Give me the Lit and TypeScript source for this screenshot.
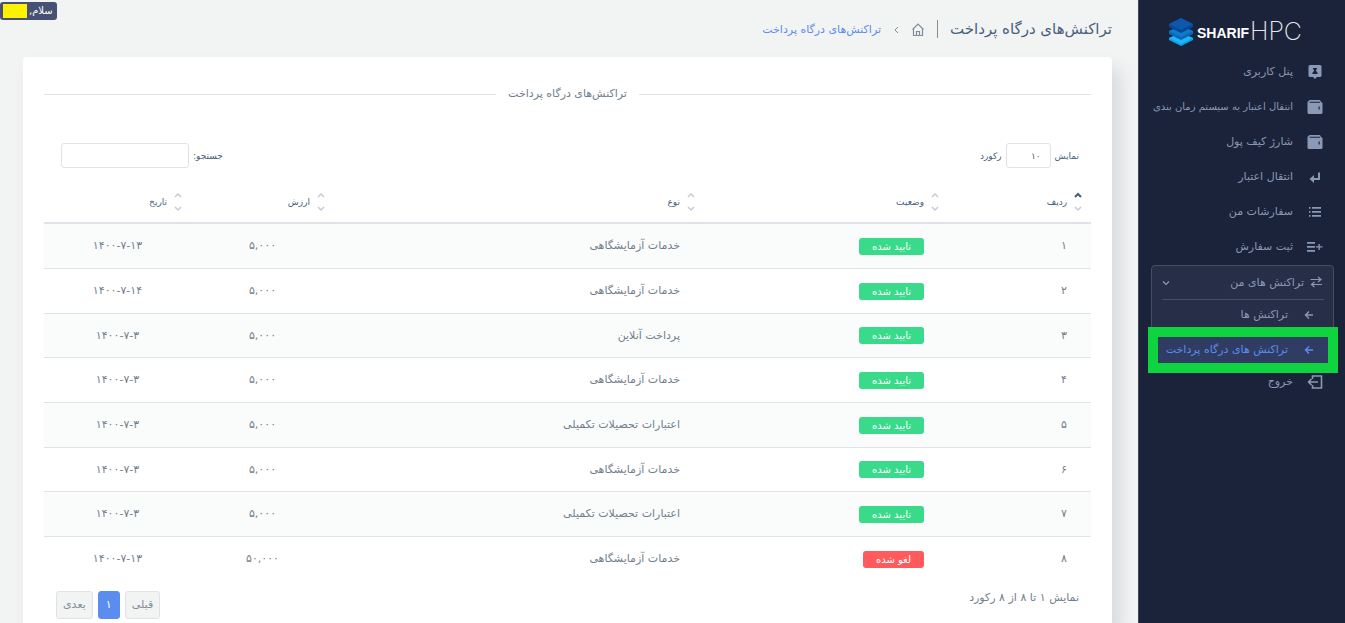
import { LitElement, html, css, svg } from "lit";
import { customElement, state } from "lit/decorators.js";

interface Row {
  id: string;
  ok: boolean;
  kind: string;
  amount: string;
  date: string;
}

const LAB = "خدمات آزمایشگاهی";
const GRAD = "اعتبارات تحصیلات تکمیلی";

const ROWS: Row[] = [
  { id: "۱", ok: true, kind: LAB, amount: "۵,۰۰۰", date: "۱۴۰۰-۷-۱۳" },
  { id: "۲", ok: true, kind: LAB, amount: "۵,۰۰۰", date: "۱۴۰۰-۷-۱۴" },
  { id: "۳", ok: true, kind: "پرداخت آنلاین", amount: "۵,۰۰۰", date: "۱۴۰۰-۷-۳" },
  { id: "۴", ok: true, kind: LAB, amount: "۵,۰۰۰", date: "۱۴۰۰-۷-۳" },
  { id: "۵", ok: true, kind: GRAD, amount: "۵,۰۰۰", date: "۱۴۰۰-۷-۳" },
  { id: "۶", ok: true, kind: LAB, amount: "۵,۰۰۰", date: "۱۴۰۰-۷-۳" },
  { id: "۷", ok: true, kind: GRAD, amount: "۵,۰۰۰", date: "۱۴۰۰-۷-۳" },
  { id: "۸", ok: false, kind: LAB, amount: "۵۰,۰۰۰", date: "۱۴۰۰-۷-۱۳" },
];

const icon = (body: unknown) =>
  html`<svg class="icon" viewBox="0 0 16 16" width="16" height="16" aria-hidden="true">${body}</svg>`;

const userIcon = icon(svg`<path fill="currentColor" fill-rule="evenodd" d="M3 1h10a1.500 1.500 0 0 1 1.500 1.500v9A1.500 1.500 0 0 1 13 13h-3l-2 2-2-2H3a1.500 1.500 0 0 1-1.500-1.500v-9A1.500 1.500 0 0 1 3 1zM6 4v1l1 1v1L5.500 8.500v1.500h5V8.500L9 7V6l1-1V4z"/>`);
const walletIcon = icon(svg`<path fill="currentColor" fill-rule="evenodd" d="M2.500 1h10.500l1 2 1.500 1v10l-1 1h-13l-1-1V3zM2.500 2.800v.9h10.500v-.9zM11.500 7.500v3h1.200v-3z"/>`);
const returnIcon = icon(svg`<path fill="none" stroke="currentColor" stroke-width="2" d="M12 3.500v6.500H5"/><path fill="currentColor" d="M7 6v8l-4.500-4z"/>`);
const listIcon = icon(svg`<path fill="currentColor" d="M2 3h1.500v1.700H2zM2 7h1.500v1.700H2zM2 11h1.500v1.700H2zM5 3h9v1.700H5zM5 7h9v1.700H5zM5 11h9v1.700H5z"/>`);
const listPlusIcon = icon(svg`<path fill="currentColor" d="M0 3h8v1.700H0zM0 7h8v1.700H0zM0 11h8v1.700H0zM11.500 5h1.300v2.300H15.500v1.300h-2.700V11h-1.300V8.600H9V7.300h2.500z"/>`);
const swapIcon = icon(svg`<path fill="none" stroke="currentColor" stroke-width="1.200" d="M2.500 4.500h10M10 2l3 2.500L10 7M4 9.500h10M6.500 7L3.500 9.500l3 2.500"/>`);
const arrowIcon = html`<svg viewBox="0 0 10 10" width="10" height="10" aria-hidden="true"><path fill="none" stroke="currentColor" stroke-width="1.400" d="M9 5H2M5 1.500L1.500 5 5 8.500"/></svg>`;
const exitIcon = icon(svg`<path fill="none" stroke="currentColor" stroke-width="1.600" d="M5.500 5V2H14.500v12H5.500V11M11 8H1.500M4.500 5L1.500 8l3 3"/>`);

@customElement("app-root")
export class AppRoot extends LitElement {
  @state() private query = "";

  static styles = css`
    :host {
      display: block;
      direction: rtl;
      min-height: 100vh;
      font-family: "DejaVu Sans", sans-serif;
      font-size: 11px;
      line-height: 16px;
      color: #727e8c;
      background: #f2f4f4;
    }
    * {
      box-sizing: border-box;
    }
    a {
      color: inherit;
      text-decoration: none;
    }
    .shell {
      display: flex;
      min-height: 100vh;
      position: relative;
      overflow: hidden;
    }
    .greeting {
      position: absolute;
      top: 2px;
      left: 0;
      display: flex;
      align-items: center;
      gap: 2px;
      height: 18px;
      padding: 0 4px 0 3px;
      border-radius: 3px;
      background: #475174;
      color: #fff;
      font-size: 10px;
    }
    .mask {
      width: 24px;
      height: 14px;
      background: #fff200;
    }
    .side {
      flex: none;
      width: 207px;
      padding-top: 16px;
      border-left: 1px solid #3c4757;
      background: #1a233a;
      color: #8a99b5;
    }
    .logo {
      display: block;
      width: 144px;
      height: 32px;
      margin: 0 34px 6px 0;
    }
    .item {
      display: flex;
      align-items: center;
      gap: 14px;
      height: 35px;
      padding-right: 22px;
      white-space: nowrap;
    }
    .icon {
      flex: none;
    }
    .small {
      font-size: 10px;
    }
    .group {
      margin: 1px 11px 0 12px;
      padding: 0 5px 0 6px;
      border: 1px solid #464d5c;
      border-radius: 4px;
      background: #272e48;
    }
    .toggle {
      display: flex;
      align-items: center;
      gap: 4px;
      width: 100%;
      height: 33px;
      padding: 0 4px;
      border: 0;
      background: none;
      color: inherit;
      font: inherit;
    }
    .toggle .caret {
      margin-right: auto;
    }
    .rule {
      height: 1px;
      margin: 0 4px;
      background: #464d5c;
    }
    .sub {
      display: flex;
      align-items: center;
      gap: 16px;
      height: 26px;
      margin: 2px 0 9px;
      padding-right: 14px;
      white-space: nowrap;
    }
    .active {
      margin-bottom: 0;
      background: #313c62;
      color: #5a8dee;
      outline: 10px solid #10d43f;
    }
    .main {
      flex: 1;
      min-width: 0;
      display: flex;
      flex-direction: column;
      padding: 0 26px 0 23px;
    }
    .crumbs {
      display: flex;
      align-items: center;
      height: 57px;
    }
    h1 {
      margin: 0;
      padding-left: 12px;
      border-left: 1px solid #828d99;
      font-size: 15px;
      line-height: 18px;
      font-weight: 400;
      color: #475f7b;
    }
    .trail {
      display: flex;
      align-items: center;
      gap: 13px;
      padding: 2px 13px 0 0;
      color: #828d99;
    }
    .home {
      display: flex;
    }
    .here {
      color: #5a8dee;
    }
    .card {
      flex: 1;
      padding: 29px 21px 4px;
      border-radius: 4px 4px 0 0;
      background: #fff;
      box-shadow: 8px 12px 18px rgba(25, 42, 70, 0.13);
    }
    .divider {
      display: flex;
      align-items: center;
      gap: 12px;
      margin: 0;
      font-size: 11px;
      font-weight: 400;
    }
    .divider::before,
    .divider::after {
      content: "";
      flex: 1;
      height: 1px;
      background: #dfe3e7;
    }
    .tools {
      display: flex;
      justify-content: space-between;
      margin-top: 41px;
      padding: 0 12px 0 17px;
    }
    .tools label {
      display: flex;
      align-items: center;
      gap: 4px;
      font-size: 9px;
      color: #475f7b;
    }
    .field {
      height: 25px;
      border: 1px solid #dfe3e7;
      border-radius: 3px;
      background: #fff;
      color: #475f7b;
      font: inherit;
      outline: none;
    }
    .count {
      width: 45px;
      padding: 0 9px;
      appearance: none;
    }
    .search {
      width: 128px;
      padding: 0 8px;
    }
    table {
      width: 100%;
      margin-top: 14px;
      border-collapse: separate;
      border-spacing: 0;
      table-layout: fixed;
    }
    .c-id,
    .c-amount {
      width: 143px;
    }
    .c-status {
      width: 244px;
    }
    .c-date {
      width: 147px;
    }
    th {
      height: 42px;
      padding: 0 8px 0 0;
      border-bottom: 2px solid #dfe3e7;
      font-size: 9px;
      font-weight: 400;
      text-align: right;
      color: #475f7b;
    }
    .sort {
      display: flex;
      align-items: center;
      gap: 6px;
    }
    .up,
    .down {
      fill: none;
      stroke: #c5cbd3;
      stroke-width: 1.500;
    }
    .asc .up {
      stroke: #475f7b;
      stroke-width: 2;
    }
    td {
      height: 45px;
      padding: 0 24px 0 0;
      border-bottom: 1px solid #dfe3e7;
    }
    tbody tr:nth-child(3n) td {
      height: 44px;
    }
    tbody tr:last-child td {
      height: 44px;
      border-bottom: 0;
    }
    tbody tr:nth-child(odd) {
      background: #fafbfb;
    }
    td.mid {
      padding: 0;
      text-align: center;
    }
    .badge {
      display: inline-block;
      padding: 0 13px;
      border-radius: 3px;
      background: #39da8a;
      color: #fff;
      font-size: 10px;
      line-height: 17px;
      vertical-align: middle;
    }
    .void {
      background: #ff5b5c;
    }
    .foot {
      display: flex;
      justify-content: space-between;
      margin-top: 9px;
      padding: 0 12px;
    }
    .pager {
      display: flex;
      gap: 5px;
      padding-top: 1px;
    }
    .pager button {
      height: 28px;
      padding: 0 6px;
      border: 1px solid #dfe3e7;
      border-radius: 3px;
      background: #f2f4f4;
      color: #828d99;
      font: inherit;
    }
    .pager .current {
      min-width: 22px;
      border-color: #5a8dee;
      background: #5a8dee;
      color: #fff;
    }
  `;

  private head(label: string, asc = false) {
    return html`<th scope="col">
      <span class="sort ${asc ? "asc" : ""}">
        <svg width="10" height="20" viewBox="0 0 10 20" aria-hidden="true">
          <path class="up" d="M2 5l3-3 3 3" /><path class="down" d="M2 15l3 3 3-3" />
        </svg>
        ${label}
      </span>
    </th>`;
  }

  private item(glyph: unknown, label: string, small = false) {
    return html`<a class="item ${small ? "small" : ""}" href="#">${glyph}<span>${label}</span></a>`;
  }

  render() {
    const rows = ROWS.filter((r) => r.kind.includes(this.query));
    return html`
      <div class="shell">
        <nav class="side">
          <svg class="logo" viewBox="0 0 144 32" role="img" aria-label="SharifHPC">
            <path fill="#0a9fe8" d="M2 22l12-5 12 5v2l-12 6-12-6z" />
            <path fill="#1fb6f5" d="M2 22l12-5 12 5-12 6z" />
            <path fill="#0868b8" d="M2 15l12-5 12 5v3l-12 6-12-6z" />
            <path fill="#0f7ccb" d="M2 15l12-5 12 5-12 6z" />
            <path fill="#06479a" d="M2 8l12-6 12 6v3l-12 6-12-6z" />
            <path fill="#0d58ab" d="M2 8l12-6 12 6-12 6z" />
            <text x="30" y="22" direction="ltr" font-family="'Liberation Sans Narrow', 'Liberation Sans', sans-serif" font-size="14" font-weight="700" fill="#fff">SHARIF</text>
            <text x="83" y="24" direction="ltr" font-family="Inter, sans-serif" font-size="25" font-weight="200" fill="#e6e8ec">HPC</text>
          </svg>
          ${this.item(userIcon, "پنل کاربری")}
          ${this.item(walletIcon, "انتقال اعتبار به سیستم زمان بندی", true)}
          ${this.item(walletIcon, "شارژ کیف پول")}
          ${this.item(returnIcon, "انتقال اعتبار")}
          ${this.item(listIcon, "سفارشات من")}
          ${this.item(listPlusIcon, "ثبت سفارش")}
          <div class="group">
            <button class="toggle" type="button" aria-expanded="true">
              ${swapIcon}<span>تراکنش های من</span>
              <svg class="caret" width="8" height="6" viewBox="0 0 8 6" aria-hidden="true">
                <path fill="none" stroke="currentColor" stroke-width="1.200" d="M1 1.500l3 3 3-3" />
              </svg>
            </button>
            <div class="rule"></div>
            <a class="sub" href="#">${arrowIcon}<span>تراکنش ها</span></a>
            <a class="sub active" href="#">${arrowIcon}<span>تراکنش های درگاه پرداخت</span></a>
          </div>
          ${this.item(exitIcon, "خروج")}
        </nav>
        <main class="main">
          <header class="crumbs">
            <h1>تراکنش‌های درگاه پرداخت</h1>
            <div class="trail">
              <a class="home" href="#" aria-label="خانه">
                <svg width="12" height="14" viewBox="0 0 12 14" aria-hidden="true">
                  <path fill="none" stroke="currentColor" stroke-width="1.200" d="M.5 6.500L6 1l5.500 5.500M1.500 6v6.500h9V6M4.500 12.500v-4h3v4" />
                </svg>
              </a>
              <svg width="5" height="8" viewBox="0 0 5 8" aria-hidden="true">
                <path fill="none" stroke="currentColor" d="M4 1L1 4l3 3" />
              </svg>
              <span class="here">تراکنش‌های درگاه پرداخت</span>
            </div>
          </header>
          <section class="card">
            <h2 class="divider">تراکنش‌های درگاه پرداخت</h2>
            <div class="tools">
              <label>
                نمایش
                <select class="field count">
                  <option>۱۰</option>
                  <option>۲۵</option>
                  <option>۵۰</option>
                </select>
                رکورد
              </label>
              <label>
                جستجو:
                <input
                  class="field search"
                  type="search"
                  .value=${this.query}
                  @input=${(e: Event) => (this.query = (e.target as HTMLInputElement).value)}
                />
              </label>
            </div>
            <table>
              <colgroup>
                <col class="c-id" /><col class="c-status" /><col /><col class="c-amount" /><col class="c-date" />
              </colgroup>
              <thead>
                <tr>
                  ${this.head("ردیف", true)} ${this.head("وضعیت")} ${this.head("نوع")}
                  ${this.head("ارزش")} ${this.head("تاریخ")}
                </tr>
              </thead>
              <tbody>
                ${rows.map(
                  (r) => html`<tr>
                    <td>${r.id}</td>
                    <td><span class="badge ${r.ok ? "" : "void"}">${r.ok ? "تایید شده" : "لغو شده"}</span></td>
                    <td>${r.kind}</td>
                    <td class="mid">${r.amount}</td>
                    <td class="mid">${r.date}</td>
                  </tr>`
                )}
              </tbody>
            </table>
            <div class="foot">
              <span>نمایش ۱ تا ۸ از ۸ رکورد</span>
              <div class="pager">
                <button type="button">قبلی</button>
                <button type="button" class="current">۱</button>
                <button type="button">بعدی</button>
              </div>
            </div>
          </section>
        </main>
        <div class="greeting"><span>سلام,</span><span class="mask"></span></div>
      </div>
    `;
  }
}
